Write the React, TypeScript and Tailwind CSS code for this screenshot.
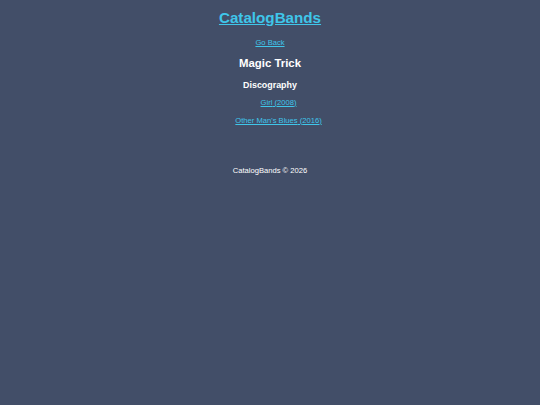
import React from 'react';

const albums = [
  { title: 'Girl', year: 2008 },
  { title: "Other Man's Blues", year: 2016 },
];

export default function App() {
  return (
    <div className="min-h-[405px] w-full bg-[#424e68] text-white font-['Liberation_Sans',Arial,sans-serif] flex flex-col items-center">
      <header className="flex flex-col items-center pt-[8px]">
        <a href="#" className="text-[15.2px] leading-[20px] font-bold text-[#3fc6ea] underline">
          CatalogBands
        </a>
        <a href="#" className="mt-[10px] text-[7.6px] leading-[10px] text-[#3fc6ea] underline">
          Go Back
        </a>
      </header>
      <main className="flex flex-col items-center">
        <h2 className="mt-[8px] text-[11.4px] leading-[14px] font-bold">Magic Trick</h2>
        <h3 className="mt-[9px] text-[8.9px] leading-[12px] font-bold">Discography</h3>
        {/* keeps the browser's default list indent, hence the pl */}
        <ul className="mt-[7px] pl-[17px] flex flex-col items-center gap-[8px]">
          {albums.map((a) => (
            <li key={a.title} className="text-[7.6px] leading-[10px]">
              <a href="#" className="text-[#3fc6ea] underline">
                {a.title} ({a.year})
              </a>
            </li>
          ))}
        </ul>
      </main>
      <footer className="mt-[40px] text-[7.6px] leading-[10px]">CatalogBands © 2026</footer>
    </div>
  );
}
